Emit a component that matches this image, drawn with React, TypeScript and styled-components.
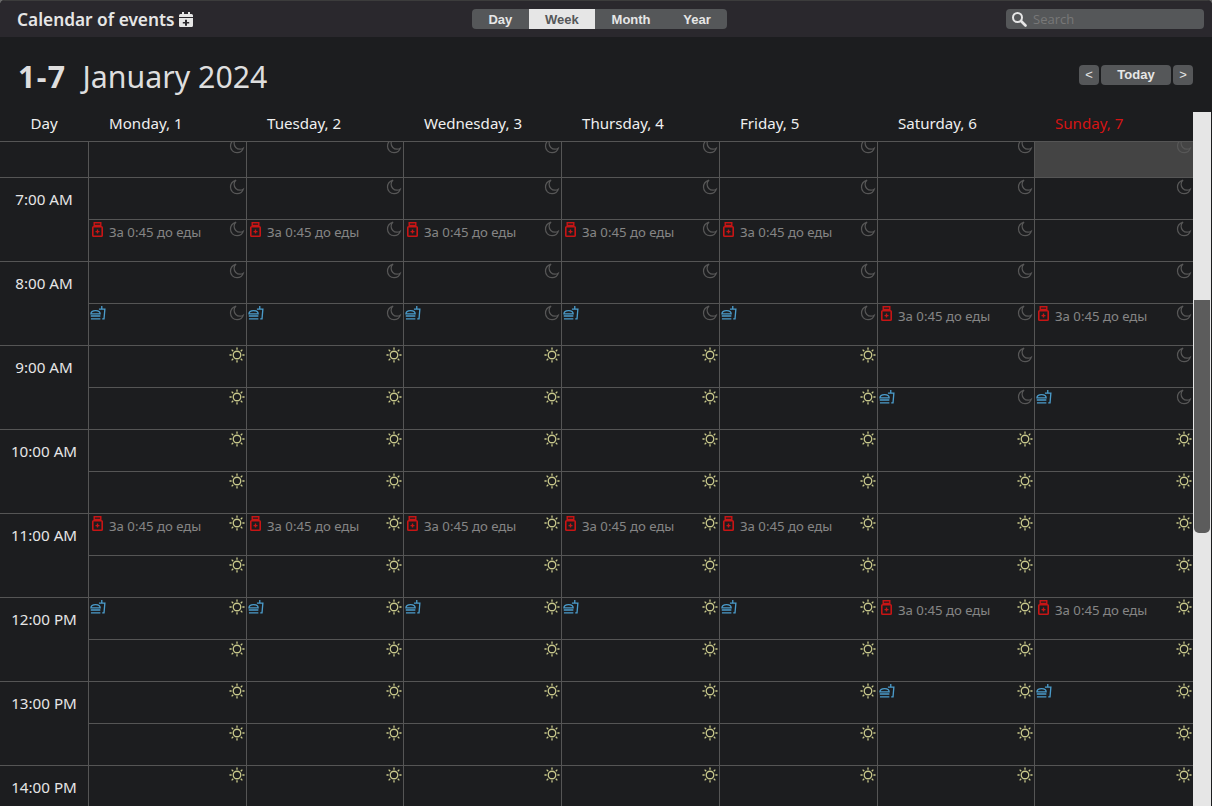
import styled, { createGlobalStyle } from "styled-components";

const GlobalStyle = createGlobalStyle`
  html, body {
    margin: 0;
    height: 100%;
    overflow: hidden;
    background: #6a6a6a;
    font-family: "Noto Sans", "Open Sans", sans-serif;
  }
`;

const Page = styled.div`
  height: 100vh;
  display: flex;
  flex-direction: column;
  background: #1c1d1f;
  color: #e6e6e6;
  border-radius: 5px 5px 0 0;
  overflow: hidden;
`;

const TopBar = styled.header`
  height: 37px;
  flex: none;
  display: grid;
  grid-template-columns: 455px auto 1fr;
  align-items: center;
  padding: 0 8px 0 17px;
  background: #2a282d;
  border-top: 1px solid #3c3c3c;
  box-sizing: border-box;
`;

const Title = styled.h1`
  margin: 0;
  display: flex;
  align-items: center;
  gap: 4px;
  font-size: 17.3px;
  font-weight: 600;
  color: #e6e6e6;
`;

const Segments = styled.div`
  display: flex;
  height: 20px;
  border-radius: 4px;
  overflow: hidden;
  background: #555759;
`;

const Segment = styled.button<{ $active?: boolean }>`
  border: 0;
  padding: 0 16.4px;
  font: bold 13px "Liberation Sans", Arial, sans-serif;
  color: ${(p) => (p.$active ? "#555759" : "#e6e6e6")};
  background: ${(p) => (p.$active ? "#e6e6e6" : "transparent")};
`;

const SearchBox = styled.label`
  justify-self: end;
  width: 198px;
  height: 20px;
  display: flex;
  align-items: center;
  gap: 6px;
  padding-left: 5px;
  box-sizing: border-box;
  border-radius: 4px;
  background: #555759;
`;

const SearchInput = styled.input`
  flex: 1;
  min-width: 0;
  border: 0;
  padding: 0;
  outline: 0;
  background: transparent;
  color: #e6e6e6;
  font-size: 13px;
  font-family: "Open Sans", sans-serif;
  &::placeholder {
    color: #787878;
    opacity: 1;
  }
`;

const SubBar = styled.div`
  height: 75px;
  flex: none;
  display: flex;
  align-items: center;
  justify-content: space-between;
  box-sizing: border-box;
  padding: 0 19px 0 18px;
`;

const Period = styled.h2`
  margin: 0;
  padding-top: 5px;
  display: flex;
  gap: 16px;
  font-size: 30.3px;
  font-weight: 400;
  line-height: 1;
  color: #dedede;
`;

const Range = styled.b`
  font-weight: 700;
  letter-spacing: 1.4px;
`;

const Nav = styled.div`
  display: flex;
  gap: 2px;
`;

const NavButton = styled.button<{ $wide?: boolean }>`
  width: ${(p) => (p.$wide ? "70px" : "20px")};
  height: 20px;
  padding: 0;
  border: 0;
  border-radius: 4px;
  background: #555759;
  color: #e6e6e6;
  font: ${(p) => (p.$wide ? "bold" : "normal")} 13px "Liberation Sans", Arial, sans-serif;
`;

const Body = styled.div`
  flex: 1;
  min-height: 0;
  display: flex;
  padding-right: 1px;
`;

const Sheet = styled.div`
  flex: 1;
  min-width: 0;
  overflow: hidden;
`;

const ScrollTrack = styled.div`
  width: 18px;
  flex: none;
  box-sizing: border-box;
  padding: 188px 1px 0;
  background: #e6e6e6;
`;

const ScrollThumb = styled.div`
  height: 233px;
  background: #5c5c5c;
  border-radius: 0 0 5px 5px;
`;

const columns = `88px 158px 157px 158px 158px 158px 157px 1fr`;

const HeadRow = styled.div`
  height: 30px;
  box-sizing: border-box;
  display: grid;
  grid-template-columns: ${columns};
  background: #1c1d1f;
  border-bottom: 1px solid #555;
`;

const HeadCell = styled.div<{ $center?: boolean; $red?: boolean }>`
  font-size: 15.1px;
  line-height: 22px;
  padding-left: ${(p) => (p.$center ? 0 : "21px")};
  text-align: ${(p) => (p.$center ? "center" : "left")};
  color: ${(p) => (p.$red ? "#d51414" : "#efefef")};
`;

const LeadRow = styled.div`
  display: grid;
  grid-template-columns: ${columns};
  height: 35px;
`;

const HourRow = styled.div`
  display: grid;
  grid-template-columns: ${columns};
  height: 84px;
`;

const TimeCell = styled.div`
  border-top: 1px solid #555;
  padding-top: 11px;
  text-align: center;
  font-size: 15.2px;
  line-height: 20px;
  color: #e6e6e6;
`;

const DayColumn = styled.div`
  display: grid;
  grid-template-rows: 1fr 1fr;
  min-width: 0;
`;

const Slot = styled.div`
  display: flex;
  justify-content: space-between;
  align-items: flex-start;
  box-sizing: border-box;
  min-width: 0;
  padding: 1px 1px 0 1px;
  border-top: 1px solid #555;
  border-left: 1px solid #555;
`;

const LeadSlot = styled.div<{ $now?: boolean }>`
  display: flex;
  justify-content: flex-end;
  overflow: hidden;
  padding-right: 1px;
  border-left: 1px solid #555;
  background: ${(p) => (p.$now ? "#444" : "transparent")};
`;

const Event = styled.div`
  display: flex;
  align-items: flex-start;
  min-width: 0;
`;

const PillMark = styled.span`
  display: flex;
  width: 19px;
  height: 16px;
  padding: 1px 0 0 2px;
  box-sizing: border-box;
`;

const FoodMark = styled.span`
  display: flex;
`;

const EventText = styled.span`
  font-size: 13.2px;
  line-height: 17px;
  margin-top: 3px;
  color: #858585;
  white-space: nowrap;
`;

const SkyMark = styled.span<{ $lead?: boolean }>`
  display: flex;
  flex: none;
  margin-top: ${(p) => (p.$lead ? "-4px" : "0")};
`;

const CalendarPlus = () => (
  <svg width="14" height="15" viewBox="0 0 14 15" fill="#e6e6e6">
    <path d="M3 0h2v2h4V0h2v2h1.500A1.500 1.500 0 0 1 14 3.500V5H0V3.500A1.500 1.500 0 0 1 1.500 2H3zM0 6h14v7.500a1.500 1.500 0 0 1-1.500 1.500h-11A1.500 1.500 0 0 1 0 13.500zm6 1.800V10H3.800v1.500H6v2.200h2v-2.200h2.200V10H8V7.800z" fillRule="evenodd" />
  </svg>
);

const Magnifier = () => (
  <svg width="16" height="16" viewBox="0 0 16 16" fill="none" stroke="#e6e6e6">
    <circle cx="6.500" cy="6.500" r="4.500" strokeWidth="2" />
    <path d="M10 10l4.500 4.500" strokeWidth="2.600" strokeLinecap="round" />
  </svg>
);

const Moon = () => (
  <svg width="16" height="16" viewBox="0 0 17 17" fill="none" stroke="#575757" strokeWidth="1.300">
    <path d="M7.500 1.200C4.200 2.200 1.600 5 1.600 8.800c0 3.800 3.100 6.800 6.900 6.800 3.200 0 5.900-1.900 6.700-4.800-1.100.8-2.200 1.100-3.500 1.100-3.600 0-6.300-2.800-6.300-6.200 0-1.700.8-3.300 2.100-4.500z" />
  </svg>
);

const Sun = () => (
  <svg width="16" height="16" viewBox="0 0 17 17" fill="none" stroke="#c9c98c" strokeWidth="1.400">
    <circle cx="8.500" cy="8.500" r="4" />
    <path d="M8.500 0.500v2.300M8.500 14.200v2.300M0.500 8.500h2.300M14.200 8.500h2.300M2.800 2.800l1.700 1.700M12.500 12.500l1.700 1.700M14.200 2.800l-1.700 1.700M4.500 12.500l-1.700 1.700" />
  </svg>
);

const PillBottle = () => (
  <svg width="11" height="15" viewBox="0 0 11 15" fill="none" stroke="#c81515">
    <path d="M2.200.8h6.600v2.600H2.200z" strokeWidth="1.400" />
    <rect x=".8" y="4.800" width="9.400" height="9.400" rx=".8" strokeWidth="1.600" />
    <path d="M5.500 7.600v4M3.500 9.600h4" strokeWidth="1.400" />
  </svg>
);

const Food = () => (
  <svg width="16" height="16" viewBox="0 0 17 17" fill="none" stroke="#4b9ccb" strokeWidth="1.400">
    <path d="M1 9.500C1 7.200 3.500 6 6 6s4.800 1.200 4.800 3.500z" />
    <path d="M.8 11.700h10.200M1 14.700h10" />
    <path d="M9.500 4.300h6.300l-.9 10.500H13" />
    <path d="M12.500 4.300V1" />
  </svg>
);

type Day = { label: string; weekend: boolean };

const days: Day[] = [
  { label: "Monday, 1", weekend: false },
  { label: "Tuesday, 2", weekend: false },
  { label: "Wednesday, 3", weekend: false },
  { label: "Thursday, 4", weekend: false },
  { label: "Friday, 5", weekend: false },
  { label: "Saturday, 6", weekend: true },
  { label: "Sunday, 7", weekend: true },
];

const hours = [7, 8, 9, 10, 11, 12, 13, 14];
const NOTE = "За 0:45 до еды";

// half hour slots, 0 = 0:00, 15 = 7:30
const schedule = {
  weekday: { pill: [15, 22], food: [17, 24], sunrise: 18 },
  weekend: { pill: [17, 24], food: [19, 26], sunrise: 20 },
};

const formatHour = (h: number) => `${h}:00 ${h < 12 ? "AM" : "PM"}`;

const SlotCell = ({ day, slot }: { day: Day; slot: number }) => {
  const plan = day.weekend ? schedule.weekend : schedule.weekday;
  return (
    <Slot>
      {plan.pill.includes(slot) ? (
        <Event>
          <PillMark>
            <PillBottle />
          </PillMark>
          <EventText>{NOTE}</EventText>
        </Event>
      ) : plan.food.includes(slot) ? (
        <Event>
          <FoodMark>
            <Food />
          </FoodMark>
        </Event>
      ) : (
        <span />
      )}
      <SkyMark>{slot >= plan.sunrise ? <Sun /> : <Moon />}</SkyMark>
    </Slot>
  );
};

export default function App() {
  return (
    <Page>
      <GlobalStyle />
      <TopBar>
        <Title>
          Calendar of events <CalendarPlus />
        </Title>
        <Segments>
          <Segment>Day</Segment>
          <Segment $active>Week</Segment>
          <Segment>Month</Segment>
          <Segment>Year</Segment>
        </Segments>
        <SearchBox>
          <Magnifier />
          <SearchInput placeholder="Search" />
        </SearchBox>
      </TopBar>
      <SubBar>
        <Period>
          <Range>1-7</Range>
          <span>January 2024</span>
        </Period>
        <Nav>
          <NavButton>&lt;</NavButton>
          <NavButton $wide>Today</NavButton>
          <NavButton>&gt;</NavButton>
        </Nav>
      </SubBar>
      <Body>
        <Sheet>
          <HeadRow>
            <HeadCell $center>Day</HeadCell>
            {days.map((d, i) => (
              <HeadCell key={d.label} $red={i === 6}>
                {d.label}
              </HeadCell>
            ))}
          </HeadRow>
          <LeadRow>
            <span />
            {days.map((d, i) => (
              <LeadSlot key={d.label} $now={i === 6}>
                <SkyMark $lead>
                  <Moon />
                </SkyMark>
              </LeadSlot>
            ))}
          </LeadRow>
          {hours.map((h) => (
            <HourRow key={h}>
              <TimeCell>{formatHour(h)}</TimeCell>
              {days.map((d) => (
                <DayColumn key={d.label}>
                  <SlotCell day={d} slot={h * 2} />
                  <SlotCell day={d} slot={h * 2 + 1} />
                </DayColumn>
              ))}
            </HourRow>
          ))}
        </Sheet>
        <ScrollTrack>
          <ScrollThumb />
        </ScrollTrack>
      </Body>
    </Page>
  );
}
